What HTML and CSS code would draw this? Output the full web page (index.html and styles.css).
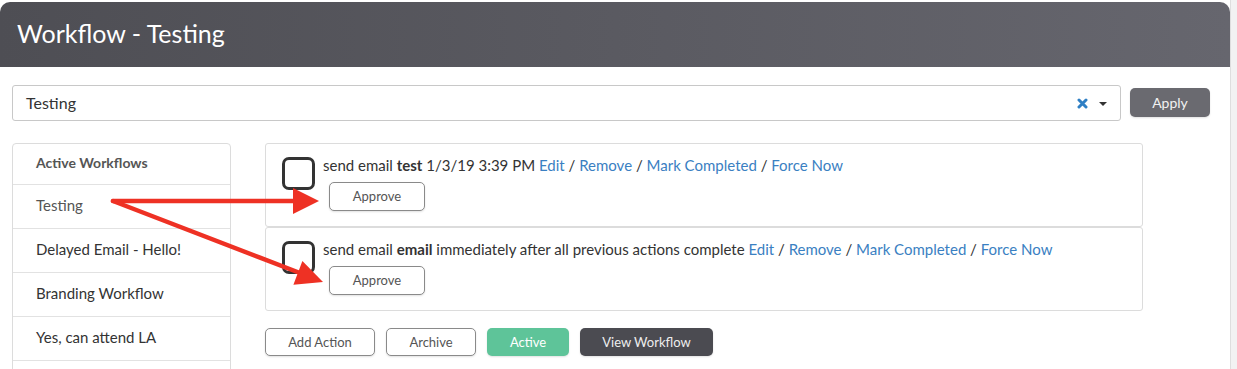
FILE: index.html
```html
<!DOCTYPE html>
<html>
<head>
  <title>Workflow - Testing</title>
  <link rel="stylesheet" href="styles.css">
</head>
<body>
  <div class="page">
    <div class="header">
      <h1>Workflow - Testing</h1>
    </div>

    <div class="filter-row">
      <div class="select-box">
        <span class="select-value">Testing</span>
        <svg class="select-clear" width="11" height="11" viewBox="0 0 11 11">
          <path d="M2 2 L9 9 M9 2 L2 9" stroke="#2f7fc4" stroke-width="3" stroke-linecap="round"/>
        </svg>
        <span class="select-caret"></span>
      </div>
      <button class="btn btn-apply">Apply</button>
    </div>

    <div class="content">
      <div class="sidebar">
        <div class="sidebar-title">Active Workflows</div>
        <div class="sidebar-item">Testing</div>
        <div class="sidebar-item">Delayed Email - Hello!</div>
        <div class="sidebar-item">Branding Workflow</div>
        <div class="sidebar-item">Yes, can attend LA</div>
        <div class="sidebar-item"></div>
      </div>

      <div class="main">
        <div class="action-card">
          <div class="check"></div>
          <div class="action-body">
            <div class="action-text">
              send email <b>test</b> 1/3/19 3:39 PM
              <a href="#">Edit</a> / <a href="#">Remove</a> / <a href="#">Mark Completed</a> / <a href="#">Force Now</a>
            </div>
            <button class="btn btn-approve">Approve</button>
          </div>
        </div>
        <div class="action-card">
          <div class="check"></div>
          <div class="action-body">
            <div class="action-text">
              send email <b>email</b> immediately after all previous actions complete
              <a href="#">Edit</a> / <a href="#">Remove</a> / <a href="#">Mark Completed</a> / <a href="#">Force Now</a>
            </div>
            <button class="btn btn-approve">Approve</button>
          </div>
        </div>

        <div class="toolbar">
          <button class="btn btn-outline btn-add">Add Action</button>
          <button class="btn btn-outline btn-archive">Archive</button>
          <button class="btn btn-active">Active</button>
          <button class="btn btn-dark">View Workflow</button>
        </div>
      </div>
    </div>
  </div>

  <!-- annotation arrows drawn over the screenshot -->
  <svg class="arrows" width="1237" height="369" viewBox="0 0 1237 369">
    <line x1="113" y1="201" x2="296" y2="201" stroke="#ee3124" stroke-width="4.5" stroke-linecap="round"/>
    <polygon points="319,201 293,188 293,214" fill="#ee3124"/>
    <line x1="113" y1="201" x2="300" y2="273" stroke="#ee3124" stroke-width="4.5" stroke-linecap="round"/>
    <polygon points="323,282 293.4,284.8 302.4,261" fill="#ee3124"/>
  </svg>
</body>
</html>
```

FILE: styles.css
```css
body {
  margin: 0;
  overflow: hidden;
  background-color: #f2f2f2;
  font-family: Lato, "Open Sans", sans-serif;
  color: #333;
}
.page {
  width: 1231px;
  height: 369px;
  overflow: hidden;
  background-color: #fff;
  border-right: 1px solid #dedede;
  padding-top: 2px;
  box-sizing: border-box;
  position: relative;
}
.header {
  height: 65px;
  box-sizing: border-box;
  border-radius: 10px 10px 0 0;
  background: linear-gradient(to right, #4e4e54, #66666e);
  display: flex;
  align-items: center;
  padding: 0 0 3px 17px;
}
.header h1 {
  margin: 0;
  font-weight: normal;
  font-size: 25px;
  color: #fff;
}
.filter-row {
  display: flex;
  align-items: flex-start;
  margin: 18px 0 0 12px;
}
.select-box {
  width: 1109px;
  height: 36px;
  box-sizing: border-box;
  border: 1px solid #c8c8c8;
  border-radius: 3px;
  display: flex;
  align-items: center;
  padding: 0 13px 2px;
}
.select-value {
  flex: 1;
  font-size: 16px;
  color: #333;
}
.select-clear {
  margin: 2px 11px 0 0;
}
.select-caret {
  width: 0;
  height: 0;
  border-left: 4px solid transparent;
  border-right: 4px solid transparent;
  border-top: 4px solid #333;
  margin-top: 3px;
}
.btn {
  font-family: Lato, "Open Sans", sans-serif;
  font-size: 13px;
  border-radius: 5px;
  cursor: pointer;
  box-shadow: 0 1px 2px rgba(0, 0, 0, 0.12);
  padding: 0 0 1px;
}
.btn-apply {
  margin: 3px 0 0 9px;
  width: 80px;
  height: 29px;
  border: none;
  background-color: #6a6a70;
  color: #f2f2f2;
  font-size: 14px;
}
.content {
  display: flex;
  align-items: flex-start;
  margin: 22px 0 0 12px;
}
.sidebar {
  width: 219px;
  box-sizing: border-box;
  border: 1px solid #dcdcdc;
  border-radius: 4px;
  flex-shrink: 0;
}
.sidebar-title {
  height: 40px;
  line-height: 38px;
  padding-left: 23px;
  font-size: 14px;
  font-weight: bold;
  color: #555;
  border-bottom: 1px solid #e2e2e2;
}
.sidebar-item {
  height: 43px;
  line-height: 40px;
  padding-left: 23px;
  font-size: 15px;
  color: #333;
  border-bottom: 1px solid #e2e2e2;
}
.sidebar-item:nth-child(2) {
  color: #555;
}
.main {
  margin-left: 34px;
}
.action-card {
  width: 878px;
  height: 84px;
  box-sizing: border-box;
  border: 1px solid #dcdcdc;
  border-radius: 3px;
  display: flex;
  padding: 13px 0 0 16px;
}
.check {
  width: 33px;
  height: 33px;
  box-sizing: border-box;
  border: 3px solid #333;
  border-radius: 7px;
  flex-shrink: 0;
}
.action-body {
  margin-left: 8px;
}
.action-text {
  font-size: 15px;
  line-height: 17px;
}
.action-text a {
  color: #3a80c2;
  text-decoration: none;
}
.btn-approve {
  display: block;
  margin: 8px 0 0 6px;
  width: 96px;
  height: 29px;
  background-color: #fff;
  border: 1px solid #8a8a8a;
  color: #555;
}
.toolbar {
  display: flex;
  gap: 11px;
  margin-top: 17px;
}
.toolbar .btn {
  height: 28px;
}
.btn-outline {
  background-color: #fff;
  border: 1px solid #8a8a8a;
  color: #555;
}
.btn-add {
  width: 110px;
}
.btn-archive {
  width: 90px;
}
.btn-active {
  width: 82px;
  border: none;
  background-color: #5ec499;
  color: #fff;
}
.btn-dark {
  width: 133px;
  border: none;
  background-color: #4b4b51;
  color: #eee;
}
.arrows {
  position: absolute;
  top: 0;
  left: 0;
  pointer-events: none;
}
```
